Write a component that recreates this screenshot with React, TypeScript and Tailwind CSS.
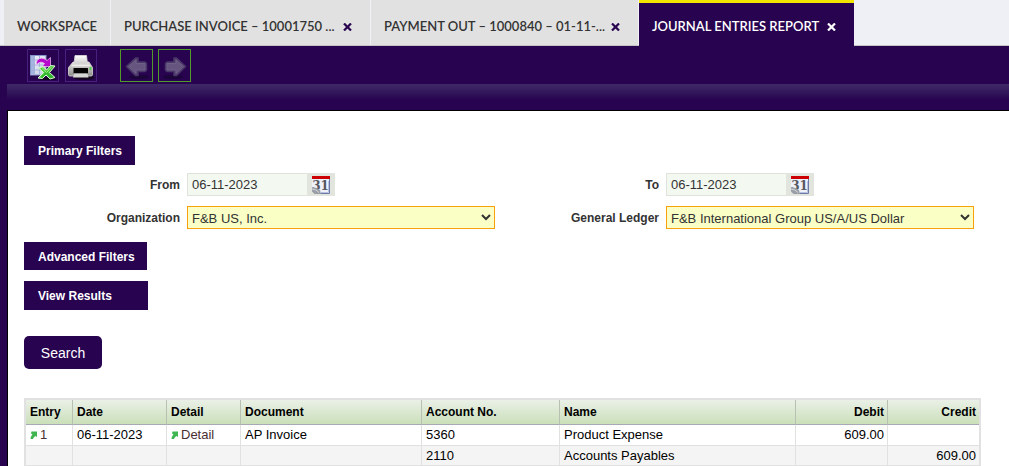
import { useState } from "react";

function ExcelIcon() {
  return (
    <svg width="28" height="28" viewBox="0 0 28 28" aria-hidden="true">
      <defs>
        <linearGradient id="sheet" x1="0" y1="0" x2="1" y2="1">
          <stop offset="0" stopColor="#f4f6ff" />
          <stop offset="1" stopColor="#c3cbe6" />
        </linearGradient>
        <linearGradient id="xl" x1="0" y1="0" x2="1" y2="1">
          <stop offset="0" stopColor="#8df06a" />
          <stop offset="1" stopColor="#1fa626" />
        </linearGradient>
      </defs>
      <ellipse cx="19" cy="27" rx="8" ry="1.500" fill="#12041f" />
      <rect x="1.500" y="3.500" width="15.500" height="19.500" fill="url(#sheet)" stroke="#8796c8" />
      <rect x="2" y="4" width="3.500" height="18.500" fill="#a5b4e0" />
      <path d="M5.500 4V22.500M10.500 4V22.500M2 8H16.500M2 13H16.500M2 18H16.500" stroke="#a2afd6" strokeWidth=".9" fill="none" />
      <path d="M7.500 13C6.500 6.500 13 4 18 8.500L21.500 5.500V14.500H13.500L15.500 11.500C12.500 9.500 9.500 10 7.500 13Z" fill="#b70acb" stroke="#f0c4f5" strokeWidth=".7" />
      <path d="M9.500 16L14 14.500L17.500 18L21.500 13.500L26 14L20.500 20.500L26 25.500L21 27L17 23L13.500 26.500L9 26L14.500 20.500Z" fill="url(#xl)" stroke="#daf8cf" strokeWidth="1" />
      <path d="M12.500 16.500L22.500 25.500M23 15L12.500 25.500" stroke="#2eb52d" strokeWidth="1.500" />
      <path d="M13 16.500L17.500 20.500L22.500 15" stroke="#a8f48a" strokeWidth="1" fill="none" />
    </svg>
  );
}

function PrinterIcon() {
  return (
    <svg width="28" height="28" viewBox="0 0 28 28" aria-hidden="true">
      <defs>
        <linearGradient id="body" x1="0" y1="0" x2="0" y2="1">
          <stop offset="0" stopColor="#e2e2df" />
          <stop offset=".45" stopColor="#bdbdba" />
          <stop offset="1" stopColor="#8c8c8a" />
        </linearGradient>
        <linearGradient id="paper" x1="0" y1="0" x2="0" y2="1">
          <stop offset="0" stopColor="#ffffff" />
          <stop offset="1" stopColor="#cccccb" />
        </linearGradient>
      </defs>
      <ellipse cx="17" cy="25.500" rx="10.500" ry="2.500" fill="#14061f" />
      <path d="M6 10H22L25.500 15.500V22.500Q25.500 24 24 24H3Q1.500 24 1.500 22.500V15.500Z" fill="url(#body)" stroke="#d7d7d4" strokeWidth=".8" />
      <path d="M8 3.500H19.500L20.500 12H7Z" fill="url(#paper)" stroke="#dddddc" strokeWidth=".8" />
      <path d="M4.500 13.500H23" stroke="#efefed" strokeWidth="1.500" />
      <rect x="6.500" y="16" width="14.500" height="5.500" rx=".5" fill="#050505" />
      <path d="M7 21.500H20.500L21.500 25.500H6Z" fill="#d6d6d4" />
      <path d="M23.500 15V18" stroke="#4bd244" strokeWidth="1.800" />
    </svg>
  );
}

function ArrowIcon({ flipped = false }: { flipped?: boolean }) {
  return (
    <svg width="28" height="28" viewBox="0 0 28 28" className={flipped ? "-scale-x-100" : ""} aria-hidden="true">
      <ellipse cx="16" cy="25" rx="10" ry="2" fill="#1c0538" />
      <path d="M3.500 14.500L12.500 6H15V10H22L23.500 11.500V18L22 19.500H15V23.500H12.500Z" fill="#55446f" stroke="#4a3768" strokeWidth="1.500" strokeLinejoin="round" />
      <path d="M5.500 14.500L13 8V11.500H22V18H13V21.500Z" fill="#65557f" stroke="#77698f" strokeWidth=".7" />
    </svg>
  );
}

function CalendarIcon() {
  return (
    <svg width="18" height="18" viewBox="0 0 18 18" aria-hidden="true">
      <rect x="0" y="2" width="18" height="16" fill="#eef0fa" />
      <rect x="0" y="0" width="18" height="3" fill="#cc0000" />
      <path d="M17.500 3V17.500H7" fill="none" stroke="#6b7aa8" />
      <path d="M9 16.500H16.500V5" fill="none" stroke="#b8c1df" />
      <text x="8.500" y="13.500" textAnchor="middle" fontFamily="DejaVu Serif, serif" fontSize="12" fontWeight="700" fill="#55585e">31</text>
      <path d="M0 11Q5 11.500 8 14L9 18H0Z" fill="#9a9fa7" />
      <path d="M0 13Q4 13 7 16.500" fill="none" stroke="#d2d5da" />
      <path d="M0 15.500L2.500 18H0Z" fill="#e1e5dd" />
    </svg>
  );
}

function LinkArrow() {
  return (
    <svg width="7" height="8" viewBox="0 0 7 8" aria-hidden="true">
      <path d="M1.500 .5H7V6L5.500 5C4.500 5.500 3.500 6.500 3 8H.5C.5 6 1.500 4.500 2.500 3.500L1 2.500Z" fill="#3fb550" />
    </svg>
  );
}

function CloseIcon() {
  return (
    <svg width="9" height="8" viewBox="0 0 9 8" aria-hidden="true">
      <path d="M1 .5L8 7.500M8 .5L1 7.500" stroke="currentColor" strokeWidth="2.200" />
    </svg>
  );
}

const tabs = [
  { label: "WORKSPACE", width: "w-[107px]", closable: false, active: false },
  { label: "PURCHASE INVOICE – 10001750 ...", width: "w-[260px]", closable: true, active: false },
  { label: "PAYMENT OUT – 1000840 – 01-11-...", width: "w-[268px]", closable: true, active: false },
  { label: "JOURNAL ENTRIES REPORT", width: "w-[215px]", closable: true, active: true },
];

function TabBar() {
  return (
    <nav className="flex h-[46px] border-b border-[#c4c4c6] bg-[#eff0f6] pl-1">
      {tabs.map((tab) => (
        <div
          key={tab.label}
          className={`flex shrink-0 items-center justify-between pr-[18px] pl-[13px] font-[Lato,sans-serif] text-[13px] font-semibold whitespace-nowrap ${tab.width} ${
            tab.active
              ? "-mb-px border-t-[3px] border-[#f2e600] bg-[#270350] pt-1 text-white"
              : "border-r border-[#f0f0f6] bg-[#e1e1e1] pt-2 text-[#333333]"
          }`}
        >
          <a href="#">{tab.label}</a>
          {tab.closable && (
            <button type="button" aria-label={`Close ${tab.label}`} className={tab.active ? "text-white" : "text-[#270350]"}>
              <CloseIcon />
            </button>
          )}
        </div>
      ))}
    </nav>
  );
}

function DateField({ id, label }: { id: string; label: string }) {
  const [value, setValue] = useState("06-11-2023");
  return (
    <>
      <label htmlFor={id} className="pr-[7px] text-right text-xs font-bold">{label}</label>
      <div className="flex h-[23px]">
        <input
          id={id}
          value={value}
          onChange={(e) => setValue(e.target.value)}
          className="w-[120px] border border-r-0 border-[#dfe3dc] bg-[#f3f9f1] pl-1 text-[13px]"
        />
        <button type="button" aria-label={`${label} calendar`} className="flex w-7 items-center justify-center bg-[#e1e5dd]">
          <CalendarIcon />
        </button>
      </div>
    </>
  );
}

function SelectField({ id, label, value }: { id: string; label: string; value: string }) {
  return (
    <>
      <label htmlFor={id} className="pr-[7px] text-right text-xs font-bold">{label}</label>
      <select id={id} className="h-[23px] w-full border border-[#f8a10c] bg-[#faffc5] pt-px text-[13px]">
        <option>{value}</option>
      </select>
    </>
  );
}

const heads = ["Entry", "Date", "Detail", "Document", "Account No.", "Name", "Debit", "Credit"];
const rows = [
  ["1", "06-11-2023", "Detail", "AP Invoice", "5360", "Product Expense", "609.00", ""],
  ["", "", "", "", "2110", "Accounts Payables", "", "609.00"],
];

function ResultsTable() {
  return (
    <div className="mt-[29px] mr-3 border-2 border-[#e1e1e1]">
      <table className="w-full table-fixed border-separate border-spacing-0 text-[13px] leading-[18px] text-black">
        <colgroup>
          <col className="w-[47px]" />
          <col className="w-[94px]" />
          <col className="w-[74px]" />
          <col className="w-[181px]" />
          <col className="w-[138px]" />
          <col />
          <col className="w-[92px]" />
          <col className="w-[91px]" />
        </colgroup>
        <thead>
          <tr className="h-[25px] bg-linear-to-b from-[#eaf0e7] to-[#c9dfb8]">
            {heads.map((head, i) => (
              <th
                key={head}
                className={`border-b border-b-[#a7a9b4] text-xs font-bold ${i > 5 ? "pr-[3px] text-right" : "pl-1 text-left"} ${
                  i < 7 ? "border-r border-r-[#b8c0b4]" : ""
                }`}
              >
                {head}
              </th>
            ))}
          </tr>
        </thead>
        <tbody>
          {rows.map((row, r) => (
            <tr key={row[4]} className={r % 2 ? "h-5 bg-[#f4f4f4]" : "h-[21px] bg-white"}>
              {row.map((cell, i) => (
                <td
                  key={heads[i]}
                  className={`border-b border-[#e1e1e1] ${i > 5 ? "pr-[3px] text-right" : "pl-1"} ${i < 7 ? "border-r" : ""}`}
                >
                  {cell && (i === 0 || i === 2) ? (
                    <a href="#" className="flex items-center gap-[3px] text-[#4a3030]">
                      <LinkArrow />
                      {cell}
                    </a>
                  ) : (
                    cell
                  )}
                </td>
              ))}
            </tr>
          ))}
        </tbody>
      </table>
    </div>
  );
}

export default function App() {
  return (
    <div className="min-h-screen overflow-x-hidden bg-[#270350] font-['Liberation_Sans',Arial,sans-serif] text-[#333333]">
      <TabBar />
      <div className="flex h-[38px] items-start pt-[3px] pl-[27px]">
        <button type="button" aria-label="Export to Excel" className="flex h-[33px] w-8 items-center justify-center border border-[#472080]">
          <ExcelIcon />
        </button>
        <button type="button" aria-label="Print" className="ml-[6px] flex h-[33px] w-8 items-center justify-center border border-[#472080]">
          <PrinterIcon />
        </button>
        <button type="button" aria-label="Previous" className="ml-[23px] flex size-[33px] items-center justify-center border border-[#519b2c]">
          <ArrowIcon />
        </button>
        <button type="button" aria-label="Next" className="ml-[5px] flex size-[33px] items-center justify-center border border-[#519b2c]">
          <ArrowIcon flipped />
        </button>
      </div>
      <div className="ml-[7px] h-[26px]">
        <div className="h-4 bg-linear-to-b from-[#402968] to-[#270350]" />
      </div>
      <main className="ml-[7px] border-t border-l border-black bg-white pt-[25px] pr-4 pl-4">
        <button type="button" className="block h-[29px] w-[111px] bg-[#270350] pt-px pl-[14px] text-left text-xs font-bold text-white">
          Primary Filters
        </button>
        <div className="mt-2 mr-[19px] grid grid-cols-[163px_1fr_171px_1fr] items-center gap-y-[10px]">
          <DateField id="from" label="From" />
          <DateField id="to" label="To" />
          <SelectField id="organization" label="Organization" value="F&B US, Inc." />
          <SelectField id="ledger" label="General Ledger" value="F&B International Group US/A/US Dollar" />
        </div>
        <button type="button" className="mt-[13px] block h-7 w-[123px] bg-[#270350] pt-px pl-[14px] text-left text-xs font-bold text-white">
          Advanced Filters
        </button>
        <button type="button" className="mt-[11px] block h-[29px] w-[124px] bg-[#270350] pt-px pl-[14px] text-left text-xs font-bold text-white">
          View Results
        </button>
        <button type="button" className="mt-[26px] block h-[33px] w-[78px] rounded-[5px] bg-[#270350] text-sm text-white">
          Search
        </button>
        <ResultsTable />
      </main>
    </div>
  );
}
